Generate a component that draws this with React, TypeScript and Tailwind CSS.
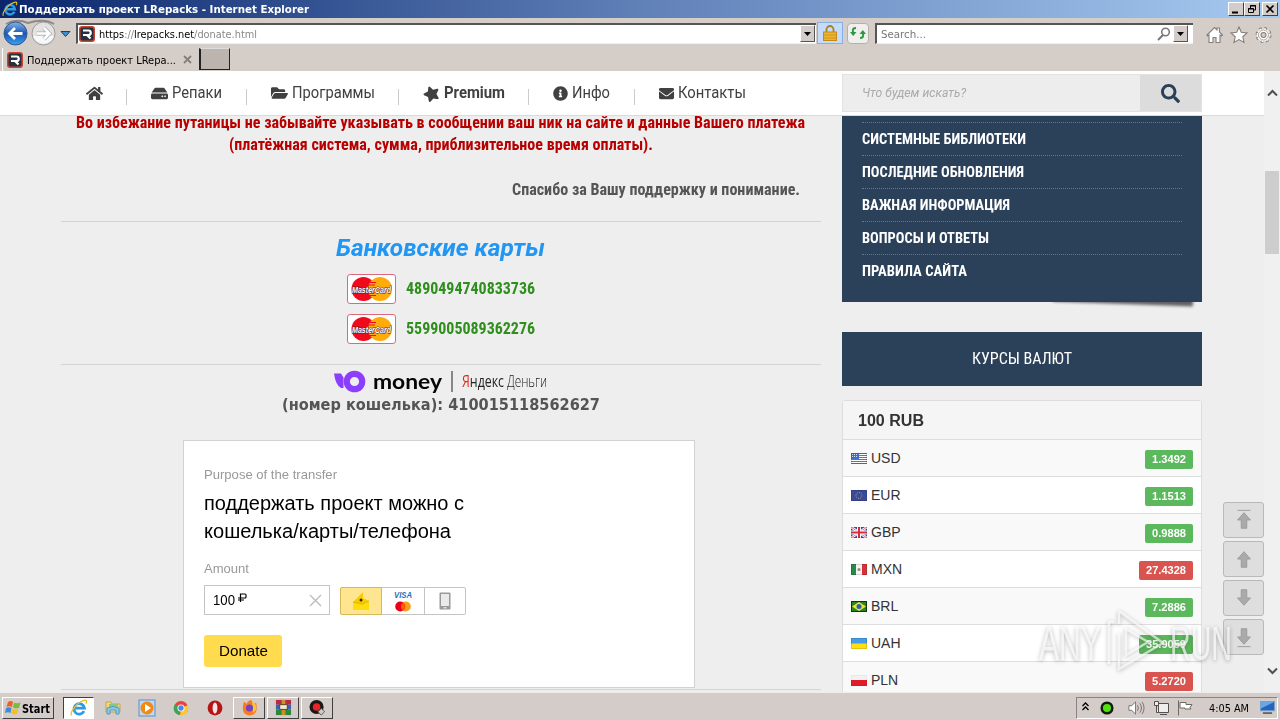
import React, { useLayoutEffect, useRef, useState } from 'react';
import { FaHome, FaHdd, FaFolderOpen, FaStar, FaInfoCircle, FaEnvelope, FaSearch } from 'react-icons/fa';

interface FitProps {
  w: number;
  className?: string;
  children: React.ReactNode;
}

// Text squeezed or stretched to a given width, stands in for condensed faces
const Fit: React.FC<FitProps> = ({ w, className = '', children }) => {
  const ref = useRef<HTMLSpanElement>(null);
  const [scale, setScale] = useState(1);

  useLayoutEffect(() => {
    if (ref.current && ref.current.offsetWidth) {
      setScale(w / ref.current.getBoundingClientRect().width);
    }
  }, [w]);

  return (
    <span className={`block shrink-0 whitespace-nowrap ${className}`} style={{ width: w }}>
      <span ref={ref} className="inline-block origin-left" style={{ transform: `scaleX(${scale})` }}>
        {children}
      </span>
    </span>
  );
};

const SiteIcon = () => (
  <svg viewBox="0 0 16 16" className="w-4 h-4 shrink-0">
    <rect width="16" height="16" rx="3" fill="#c8442f" />
    <rect x="1.5" y="1.5" width="13" height="13" rx="2" fill="#26303e" />
    <path d="M4 4.500h5.500a2 2 0 0 1 0 4.500H4M8 9l3.500 3.500" fill="none" stroke="#fff" strokeWidth="2.200" />
  </svg>
);

const IeIcon = ({ className = '' }) => (
  <svg viewBox="0 0 18 18" className={className}>
    <path d="M14 12.2a5.3 5.3 0 1 1 .5-3H5" fill="none" stroke="#2f9be0" strokeWidth="2.7" />
    <path d="M1.500 16.500C-.5 13 8 2.500 15 1.200c2.400-.3 1.600 2.400.8 3.400" fill="none" stroke="#e9bd2e" strokeWidth="1.300" />
  </svg>
);

const DropButton = () => (
  <span className="w-[15px] h-[17px] bg-[#d4ccc8] border border-t-white border-l-white border-r-[#555] border-b-[#555] flex items-center justify-center shrink-0">
    <svg viewBox="0 0 7 4" className="w-[7px] h-1"><path d="M0 0h7L3.500 4z" fill="#000" /></svg>
  </span>
);

const TitleBar = () => (
  <div className="h-[18px] shrink-0 bg-linear-to-r from-[#0c266c] via-[#6080b8] to-[#a6caf0] flex items-center pl-[2px] pr-[2px]">
    <IeIcon className="w-4 h-4 shrink-0" />
    <Fit w={290} className="ml-[1px] mt-[1px] text-[11px] leading-[17px] font-bold text-white">
      Поддержать проект LRepacks - Internet Explorer
    </Fit>
    <div className="ml-auto flex h-[14px]">
      {['min', 'restore', 'close'].map((kind) => (
        <span
          key={kind}
          className={`w-4 h-[14px] bg-[#d4ccc8] border border-t-white border-l-white border-r-[#404040] border-b-[#404040] flex items-center justify-center ${kind === 'close' ? 'ml-[2px]' : ''}`}
        >
          <svg viewBox="0 0 12 10" className="w-3 h-[10px]" fill="none" stroke="#000">
            {kind === 'min' && <path d="M2 8.500h6" strokeWidth="2" />}
            {kind === 'restore' && <path d="M4.500 4V1.500h5V6H8M4 2h6M2.500 4.500h5v4h-5zM2 5h6" />}
            {kind === 'close' && <path d="M2.500 1.500l7 7M9.500 1.500l-7 7" strokeWidth="1.700" />}
          </svg>
        </span>
      ))}
    </div>
  </div>
);

const AddressBar = () => (
  <div className="h-[30px] shrink-0 flex items-center pl-[2px]">
    <svg viewBox="0 0 70 28" className="w-[70px] h-7 shrink-0">
      <defs>
        <linearGradient id="back" x1="0" y1="0" x2="0" y2="1">
          <stop offset="0" stopColor="#86b4e6" />
          <stop offset=".5" stopColor="#1c56b4" />
          <stop offset="1" stopColor="#3ba4ee" />
        </linearGradient>
      </defs>
      <path d="M4 5Q14-1 26 4Q42-1 52 5" fill="none" stroke="#8e8a88" strokeWidth="2" />
      <circle cx="13.500" cy="14.500" r="11.500" fill="url(#back)" stroke="#31588f" />
      <path d="M20.500 14.500H8M13 9l-5.500 5.500L13 20" fill="none" stroke="#fff" strokeWidth="2.800" />
      <circle cx="41.500" cy="14.500" r="11.500" fill="#e4e3e4" stroke="#9a9a9c" />
      <path d="M31 17a11 11 0 0 0 21 0z" fill="#f8f8f8" />
      <path d="M34.500 14.500H47M42 9l5.500 5.500L42 20" fill="none" stroke="#aaa" strokeWidth="4" />
      <path d="M34.500 14.500H47M42 9l5.500 5.500L42 20" fill="none" stroke="#fff" strokeWidth="2.600" />
      <path d="M59 12.500h9l-4.500 5z" fill="#3f8fd0" stroke="#1d4265" />
    </svg>
    <div className="ml-[4px] w-[740px] h-[21px] bg-white border-t-2 border-l-2 border-[#555] border-b border-b-[#eee] flex items-center px-[1px]">
      <SiteIcon />
      <Fit w={158} className="ml-[4px] pt-[2px] text-[11px] leading-4 text-[#888]">
        <span className="text-black">https</span>://<span className="text-black">lrepacks.net</span>/donate.html
      </Fit>
      <span className="ml-auto flex"><DropButton /></span>
    </div>
    <div className="ml-[1px] w-[26px] h-[22px] bg-[#c4dcfa] border border-[#86b0e6] flex items-center justify-center">
      <svg viewBox="0 0 14 16" className="w-[14px] h-4">
        <path d="M3.500 8V4.500a3.500 3.500 0 0 1 7 0V8" fill="none" stroke="#a8811c" strokeWidth="1.800" />
        <rect x=".5" y="7" width="13" height="8.500" fill="#f0b42c" stroke="#c38a18" />
        <path d="M1 10h12M1 13h12" stroke="#c99620" />
      </svg>
    </div>
    <div className="ml-[4px] w-[22px] h-[21px] bg-[#f0efed] border border-[#b5b0ac] rounded-sm flex items-center justify-center">
      <svg viewBox="0 0 16 14" className="w-4 h-[14px]" fill="#2c9a3c">
        <path d="M6 1v2Q3 3 4 6h2.500L3.200 10 0 6h2Q1 1 6 1z" />
        <path d="M10 13v-2q3 0 2-3H9.500L12.800 4 16 8h-2q1 5-4 5z" />
      </svg>
    </div>
    <div className="ml-[6px] w-[318px] h-[21px] bg-white border-t-2 border-l-2 border-[#555] border-b border-b-[#eee] flex items-center pr-[5px]">
      <Fit w={45} className="ml-[4px] pt-[2px] text-[11px] leading-4 text-[#777]">Search...</Fit>
      <svg viewBox="0 0 14 14" className="w-[14px] h-[14px] ml-auto mr-[2px]" fill="none" stroke="#777">
        <circle cx="8.500" cy="5" r="3.800" strokeWidth="1.500" />
        <path d="M6 8l-5 5" strokeWidth="2" />
      </svg>
      <DropButton />
    </div>
    <svg viewBox="0 0 70 18" className="w-[70px] h-[18px] ml-[13px] mt-[4px] shrink-0" fill="#fff" stroke="#857e7a" strokeWidth="1.100">
      <path d="M1 9l7.500-7.500L11 4V2h2.500v4L16.500 9l-1 1L14 9v7.500h-4v-5H7v5H3V9l-1.500 1z" />
      <path d="M33 1l2.300 5.300 5.700.6-4.200 3.900 1.200 5.700-5-2.900-5 2.900 1.200-5.700L25 6.900l5.700-.6z" />
      <circle cx="57.500" cy="9" r="6.300" strokeWidth="3.400" strokeDasharray="2.400 2.550" />
      <circle cx="57.500" cy="9" r="6" stroke="#fff" strokeWidth="2" strokeDasharray="1.600 3.112" />
      <circle cx="57.500" cy="9" r="5" strokeWidth=".7" />
      <circle cx="57.500" cy="9" r="2.500" fill="#d5cdc8" />
    </svg>
  </div>
);

const TabRow = () => (
  <div className="h-[23px] shrink-0 flex items-start">
    <div className="ml-[2px] w-[196px] h-[23px] border-l border-white flex items-center pl-[4px]">
      <SiteIcon />
      <Fit w={149} className="ml-[4px] pt-[2px] text-[11px] leading-4 text-black">Поддержать проект LRepa...</Fit>
      <svg viewBox="0 0 9 9" className="w-[9px] h-[9px] ml-[7px]"><path d="M1 1l7 7M8 1L1 8" stroke="#85807d" strokeWidth="1.800" /></svg>
    </div>
    <div className="ml-[1px] w-[31px] h-[22px] bg-[#bcb4ae] border border-[#222] border-t-[#ddd] border-l-2" />
  </div>
);

const menu = [
  { label: '', w: 0, icon: <FaHome className="w-[17px] h-[17px]" />, box: 'w-[65px]' },
  { label: 'Репаки', w: 50, icon: <FaHdd className="w-[17px] h-[17px]" />, box: 'w-[120px]' },
  { label: 'Программы', w: 83, icon: <FaFolderOpen className="w-[17px] h-[16px]" />, box: 'w-[152px]' },
  { label: 'Premium', w: 61, icon: <FaStar className="w-[17px] h-[15px] -rotate-[20deg]" />, box: 'w-[130px]' },
  { label: 'Инфо', w: 38, icon: <FaInfoCircle className="w-[15px] h-[15px]" />, box: 'w-[106px]' },
  { label: 'Контакты', w: 68, icon: <FaEnvelope className="w-[15px] h-[15px]" />, box: 'w-[112px]' },
];

const SiteHeader = () => (
  <header className="h-[45px] shrink-0 bg-white border-b border-[#d8dadb] flex pl-[62px] font-[Roboto,sans-serif]">
    {menu.map((m, i) => (
      <div key={i} className={`flex items-center pl-6 h-[44px] text-[16px] text-[#404040] ${m.box}`}>
        {m.icon}
        {m.label && (
          <Fit w={m.w} className={m.label === 'Premium' ? 'ml-1 font-bold' : 'ml-1'}>{m.label}</Fit>
        )}
        {i < menu.length - 1 && <span className="ml-auto mt-2 w-px h-4 bg-[#ccc]" />}
      </div>
    ))}
    <div className="ml-[95px] mt-[3px] w-[360px] h-[38px] bg-[#ededed] border border-[#e2e2e2] flex">
      <Fit w={104} className="ml-[19px] text-[12px] leading-[36px] italic text-[#aaa]">Что будем искать?</Fit>
      <div className="ml-auto w-[61px] bg-[#dcdcdc] flex items-center justify-center">
        <FaSearch className="w-[19px] h-[19px] text-[#2b3f58]" />
      </div>
    </div>
  </header>
);

const MasterCard = () => (
  <svg viewBox="0 0 49 30" className="w-[49px] h-[30px]">
    <rect x=".5" y=".5" width="48" height="29" rx="2.500" fill="#fff" stroke="#e0687c" />
    <circle cx="16.500" cy="15" r="12" fill="#f00a1c" />
    <circle cx="33" cy="15" r="12" fill="#ffab0a" />
    <path d="M22 8.500h7M21 11h7M21 19h7M22 21.500h7" stroke="#f00a1c" />
    <text x="5" y="18.500" textLength="39" lengthAdjust="spacingAndGlyphs" fontFamily="Liberation Sans" fontWeight="bold" fontStyle="italic" fontSize="8.500" fill="#fff" stroke="#5a1a10" strokeWidth="1" paintOrder="stroke">MasterCard</text>
  </svg>
);

const WalletLogo = () => (
  <div className="h-6 flex items-center">
    <svg viewBox="0 0 32 24" className="w-8 h-6">
      <path d="M0 4.500h7l2.500 4v10.500H7Q1.500 16 0 4.500z" fill="#8b3ffd" />
      <circle cx="20.500" cy="12.500" r="7.700" fill="#eee" stroke="#8b3ffd" strokeWidth="6.200" />
    </svg>
    <Fit w={69} className="ml-[7px] text-[21px] leading-6 font-bold text-[#050505] font-[Lato,sans-serif]">money</Fit>
    <span className="ml-[9px] w-[2px] h-[21px] bg-[#888]" />
    <Fit w={42} className="ml-[9px] text-[16px] leading-6 font-normal text-[#222] font-['Open_Sans',sans-serif]">
      <span className="text-[#e0291c]">Я</span>ндекс
    </Fit>
    <Fit w={40} className="ml-[3px] text-[16px] leading-6 font-light text-[#222] font-['Open_Sans',sans-serif]">Деньги</Fit>
  </div>
);

const PaymentForm = () => (
  <div className="ml-[122px] mt-[24px] w-[512px] h-[248px] shrink-0 bg-white border border-[#d2d2d2] pl-5 pt-[24px] font-normal font-['Liberation_Sans',sans-serif]">
    <Fit w={133} className="text-[13px] leading-5 text-[#999]">Purpose of the transfer</Fit>
    <Fit w={260} className="mt-[4px] text-[20px] leading-7 text-black">поддержать проект можно с</Fit>
    <Fit w={247} className="text-[20px] leading-7 text-black">кошелька/карты/телефона</Fit>
    <Fit w={45} className="mt-[14px] text-[13px] leading-5 text-[#999]">Amount</Fit>
    <div className="mt-[6px] flex items-end">
      <div className="w-[126px] h-[30px] border border-[#c4c4c4] flex items-center pl-2 pr-[7px]">
        <Fit w={22} className="text-[14px] text-black">100</Fit>
        <svg viewBox="0 0 9 9" className="w-[9px] h-[9px] ml-[3px] mb-[5px]" fill="none" stroke="#000">
          <path d="M2.500 9V1h4.500q1 0 1 1.200v1.600q0 1.200-1 1.200H0M0 7h6" strokeWidth="1.200" />
        </svg>
        <svg viewBox="0 0 13 13" className="w-[13px] h-[13px] ml-auto"><path d="M1 1l11 11M12 1L1 12" stroke="#bbb" strokeWidth="1.300" /></svg>
      </div>
      <div className="ml-[10px] w-[126px] h-[28px] flex rounded-[2px] border border-[#c4c4c4]">
        <div className="w-[42px] h-[28px] -mt-px -ml-px bg-[#ffe58f] border border-[#d6b95a] rounded-l-[2px] flex items-center justify-center">
          <svg viewBox="0 0 18 20" className="w-[18px] h-5">
            <path d="M1 11L11 1v6l6 3v9H1z" fill="#f8cc00" />
            <path d="M1 11l9 2 7-3v9H1z" fill="#ffdc10" />
            <path d="M1 11l9 2 7-3" fill="none" stroke="#e0b400" />
            <circle cx="9" cy="9" r="1.500" fill="#3a2400" />
          </svg>
        </div>
        <div className="w-[43px] border-r border-[#c4c4c4] flex items-center justify-center">
          <svg viewBox="0 0 20 22" className="w-5 h-[22px]">
            <text x="1" y="8" textLength="18" lengthAdjust="spacingAndGlyphs" fontFamily="Liberation Sans" fontSize="8.500" fontWeight="bold" fontStyle="italic" fill="#2673b8">VISA</text>
            <circle cx="12.800" cy="16.500" r="5" fill="#f79f1a" />
            <circle cx="7.200" cy="16.500" r="5" fill="#ea001b" />
            <path d="M10 12.500a5 5 0 0 1 0 8a5 5 0 0 1 0-8z" fill="#ff5f01" />
          </svg>
        </div>
        <div className="flex-1 flex items-center justify-center">
          <svg viewBox="0 0 12 18" className="w-3 h-[18px]">
            <rect x=".5" y=".5" width="11" height="17" rx="1" fill="#999" />
            <rect x="2" y="2" width="8" height="12" fill="#eaeaea" />
            <rect x="4.500" y="15" width="3" height="1.500" fill="#ddd" />
          </svg>
        </div>
      </div>
    </div>
    <div className="mt-5 w-[78px] h-8 rounded-[3px] bg-[#ffdb4d] flex items-center justify-center">
      <Fit w={49} className="text-[15px] text-black">Donate</Fit>
    </div>
  </div>
);

const Article = () => (
  <main className="w-[760px] shrink-0 flex flex-col font-['Roboto_Condensed',Roboto,sans-serif] font-bold text-[16px] leading-[22px]">
    <Fit w={729} className="-mt-[4px] ml-[15px] text-[#b80000]">
      Во избежание путаницы не забывайте указывать в сообщении ваш ник на сайте и данные Вашего платежа
    </Fit>
    <Fit w={424} className="ml-[168px] text-[#b80000]">(платёжная система, сумма, приблизительное время оплаты).</Fit>
    <Fit w={288} className="mt-[23px] ml-[451px] text-[#555]">Спасибо за Вашу поддержку и понимание.</Fit>
    <div className="mt-[20px] h-px shrink-0 bg-[#d4d4d4]" />
    <Fit w={209} className="mt-[11px] mb-px ml-[275px] text-[24px] leading-[30px] italic text-[#2196f3] font-[Roboto,sans-serif]">Банковские карты</Fit>
    {['4890494740833736', '5599005089362276'].map((n) => (
      <div key={n} className="mt-[10px] ml-[286px] h-[30px] flex items-center">
        <MasterCard />
        <Fit w={129} className="ml-[10px] text-[#2f8f1c]">{n}</Fit>
      </div>
    ))}
    <div className="mt-[20px] h-px shrink-0 bg-[#d4d4d4]" />
    <div className="mt-[4px] ml-[273px]"><WalletLogo /></div>
    <Fit w={318} className="mt-[1px] ml-[221px] text-[16px] text-[#555] font-['DejaVu_Sans',sans-serif]">
      (номер кошелька): 410015118562627
    </Fit>
    <PaymentForm />
    <div className="mt-[1px] h-px shrink-0 bg-[#d4d4d4]" />
  </main>
);

const sections = [
  { label: 'Системные библиотеки', w: 164 },
  { label: 'Последние обновления', w: 162 },
  { label: 'Важная информация', w: 148 },
  { label: 'Вопросы и ответы', w: 127 },
  { label: 'Правила сайта', w: 105 },
];

const Flag = ({ code }: { code: string }) => (
  <svg viewBox="0 0 16 11" className="w-4 h-[11px]">
    {code === 'USD' && (
      <>
        <rect width="16" height="11" fill="#fff" />
        <path d="M0 .5h16M0 2.500h16M0 4.500h16M0 6.500h16M0 8.500h16M0 10.500h16" stroke="#e8404c" />
        <rect width="8" height="6" fill="#3a6ed0" />
        <path d="M1 1.500h6M1 3.500h6" stroke="#cfdcf6" strokeDasharray="1 1" />
      </>
    )}
    {code === 'EUR' && (
      <>
        <rect width="16" height="11" fill="#3c4a94" />
        <circle cx="8" cy="5.500" r="3" fill="none" stroke="#b5b390" strokeDasharray="1 1.300" />
      </>
    )}
    {code === 'GBP' && (
      <>
        <rect width="16" height="11" fill="#44529c" />
        <path d="M0 0l16 11M16 0L0 11" stroke="#fff" strokeWidth="2.500" />
        <path d="M0 0l16 11M16 0L0 11" stroke="#d8485c" strokeWidth=".8" />
        <path d="M8 0v11M0 5.500h16" stroke="#fff" strokeWidth="4" />
        <path d="M8 0v11M0 5.500h16" stroke="#d82c3c" strokeWidth="2" />
      </>
    )}
    {code === 'MXN' && (
      <>
        <rect width="16" height="11" fill="#f4f4f4" />
        <rect width="5" height="11" fill="#268a4a" />
        <rect x="11" width="5" height="11" fill="#d83038" />
        <circle cx="8" cy="5.500" r="1.600" fill="#a08c6c" />
      </>
    )}
    {code === 'BRL' && (
      <>
        <rect width="16" height="11" fill="#2c8420" />
        <path d="M8 1l7 4.500L8 10 1 5.500z" fill="#e8e43c" />
        <circle cx="8" cy="5.500" r="2.500" fill="#2c62a4" />
      </>
    )}
    {code === 'UAH' && (
      <>
        <rect width="16" height="11" fill="#ffdf10" />
        <rect width="16" height="5.500" fill="#459ce8" />
      </>
    )}
    {code === 'PLN' && (
      <>
        <rect width="16" height="11" fill="#f2f2f2" />
        <rect y="5" width="16" height="6" fill="#e01c28" />
      </>
    )}
    <rect x=".5" y=".5" width="15" height="10" fill="none" stroke="#000" strokeOpacity={code === 'BRL' ? 0.6 : code === 'PLN' ? 0.04 : 0.12} />
  </svg>
);

const rates = [
  { code: 'USD', value: '1.3492', up: true },
  { code: 'EUR', value: '1.1513', up: true },
  { code: 'GBP', value: '0.9888', up: true },
  { code: 'MXN', value: '27.4328', up: false },
  { code: 'BRL', value: '7.2886', up: true },
  { code: 'UAH', value: '35.9059', up: true },
  { code: 'PLN', value: '5.2720', up: false },
];

const Sidebar = () => (
  <aside className="ml-[21px] w-[360px] shrink-0 flex flex-col font-['Roboto_Condensed',Roboto,sans-serif]">
    <div className="relative h-[186px] shrink-0">
      <div className="absolute right-[9px] -bottom-[2px] w-[140px] h-[10px] rotate-[2deg] bg-black/60 blur-[1.5px]" />
      <div className="relative h-full bg-[#2b4059] px-5 pt-[6px]">
        {sections.map((s) => (
          <div key={s.label} className="h-[33px] border-t border-dotted border-[#58799a]">
            <Fit w={s.w} className="text-[14px] leading-[33px] font-bold uppercase text-white">{s.label}</Fit>
          </div>
        ))}
      </div>
    </div>
    <div className="mt-[30px] h-[54px] shrink-0 bg-[#2b4059] flex items-center justify-center">
      <Fit w={100} className="text-[16px] text-white">КУРСЫ ВАЛЮТ</Fit>
    </div>
    <div className="mt-[14px] shrink-0 border border-[#ddd] rounded-t-[3px] bg-white font-['Liberation_Sans',sans-serif]">
      <div className="h-[38px] bg-[#f5f5f5] flex items-center pl-[15px] pt-[2px]">
        <Fit w={66} className="text-[16px] font-bold text-[#333]">100 RUB</Fit>
      </div>
      {rates.map((r) => (
        <div key={r.code} className="h-[37px] border-t border-[#ddd] odd:bg-white even:bg-[#f9f9f9] flex items-center pl-[8px] pr-[8px]">
          <Flag code={r.code} />
          <span className="ml-1 text-[14px] text-[#333]">{r.code}</span>
          <span className={`ml-auto mt-[3px] h-[19px] px-[7px] rounded-[2px] flex items-center text-white ${r.up ? 'bg-[#5cb85c]' : 'bg-[#d9534f]'}`}>
            <Fit w={r.value.length === 7 ? 40 : 34} className="text-[11px] font-bold">{r.value}</Fit>
          </span>
        </div>
      ))}
    </div>
  </aside>
);

const scrollButtons = [
  { id: 'top', d: 'M4 1.500h14M11 4l7 8h-4v9H8v-9H4z', flip: false },
  { id: 'up', d: 'M11 4l7 8h-4v9H8v-9H4z', flip: false },
  { id: 'down', d: 'M11 4l7 8h-4v9H8v-9H4z', flip: true },
  { id: 'bottom', d: 'M4 1.500h14M11 4l7 8h-4v9H8v-9H4z', flip: true },
];

// Floating page controls, they sit over the content
const ScrollButtons = () => (
  <div className="absolute left-[1223px] top-[431px] flex flex-col gap-[3px]">
    {scrollButtons.map((b) => (
      <div key={b.id} className="w-[41px] h-[36px] rounded-[3px] bg-[#dedede] border border-[#b9b9b9] flex items-center justify-center">
        <svg viewBox="0 0 22 24" className={`w-[22px] h-[22px] ${b.flip ? 'rotate-180' : ''}`}>
          <path d={b.d} fill="#aaa" stroke="#999" />
        </svg>
      </div>
    ))}
  </div>
);

const Watermark = () => (
  <svg viewBox="0 0 200 68" className="absolute left-[1036px] top-[536px] w-[200px] h-[68px] drop-shadow-[0_1px_2px_rgba(0,0,0,0.4)]">
    <g fontFamily="Liberation Sans" fontSize="49" fill="#fff" fillOpacity=".7">
      <text x="3" y="53" textLength="62" lengthAdjust="spacingAndGlyphs">ANY</text>
      <text x="134" y="53" textLength="62" lengthAdjust="spacingAndGlyphs">RUN</text>
    </g>
    <g fill="none" stroke="#fff" strokeOpacity=".65" strokeWidth="2.500">
      <path d="M83 4v13M83 26v36l44-26L83 4" />
      <path d="M90 22v26l22-13z" />
      <path d="M78 15h-5v42" />
    </g>
  </svg>
);

const PageScrollbar = () => (
  <div className="w-4 shrink-0 bg-[#f0f0f0] flex flex-col items-center">
    <svg viewBox="0 0 11 8" className="w-[11px] h-2 mt-[18px]"><path d="M1 6.500l4.500-4.500L10 6.500" fill="none" stroke="#505050" strokeWidth="2" /></svg>
    <div className="mt-[74px] w-[14px] h-[83px] bg-[#cdcdcd]" />
    <svg viewBox="0 0 11 8" className="w-[11px] h-2 mt-auto mb-[17px]"><path d="M1 1.500l4.500 4.500L10 1.500" fill="none" stroke="#505050" strokeWidth="2" /></svg>
  </div>
);

const raised = 'bg-[#d4ccc8] border border-t-white border-l-white border-r-[#404040] border-b-[#404040]';

const Taskbar = () => (
  <div className="h-7 shrink-0 bg-[#d4ccc8] border-t border-[#f0ece9] flex items-center pl-[2px] pt-[2px]">
    <div className={`w-[52px] h-[22px] flex items-center pl-[2px] ${raised}`}>
      <svg viewBox="0 0 16 16" className="w-4 h-4">
        <path d="M3 2q3-2 5 0L7 7Q4 5.500 1.500 7z" fill="#e8622c" />
        <path d="M9 2.500q3 1.500 6.500 0L14 8q-3 1-6-.5z" fill="#7cbc3c" />
        <path d="M1 8q3-1.500 5.500 0L5.500 13Q3 11.500 0 13z" fill="#3c8cd8" />
        <path d="M7.500 8.500q3 1.500 6 .5L12 14q-3 1-6-.5z" fill="#f4c028" />
      </svg>
      <Fit w={28} className="ml-[1px] pt-[2px] text-[12px] leading-4 font-bold text-black">Start</Fit>
    </div>
    <div className="ml-[9px] w-[31px] h-[22px] bg-white border border-t-[#404040] border-l-[#404040] border-r-white border-b-white flex items-center justify-center">
      <IeIcon className="w-[18px] h-[18px]" />
    </div>
    <svg viewBox="0 0 18 18" className="w-[18px] h-[18px] ml-[10px]">
      <path d="M2 3h5l1 2h8v8H2z" fill="#f5d876" stroke="#c9a548" />
      <path d="M5 5h9v4H5z" fill="#8cc67e" />
      <path d="M3 15V9q6-3 12 0v6h-3v-4H6v4z" fill="#8cc8ee" stroke="#4a9ccc" />
    </svg>
    <svg viewBox="0 0 18 18" className="w-[18px] h-[18px] ml-4">
      <rect x="1" y="1" width="16" height="16" fill="#bcd8f2" stroke="#5a92cc" />
      <circle cx="9" cy="9" r="6.500" fill="#f08a14" />
      <path d="M7 5l6 4-6 4z" fill="#fff" />
    </svg>
    <svg viewBox="0 0 18 18" className="w-4 h-4 ml-[17px]">
      <circle cx="9" cy="9" r="8" fill="#e8453a" />
      <path d="M9 9L2 5a8 8 0 0 0 5 12z" fill="#3ca654" />
      <path d="M9 9l-1 8A8 8 0 0 0 16.500 6z" fill="#fcc934" />
      <circle cx="9" cy="9" r="4" fill="#fff" />
      <circle cx="9" cy="9" r="3" fill="#4688ec" />
    </svg>
    <svg viewBox="0 0 18 18" className="w-4 h-4 ml-[18px]">
      <circle cx="9" cy="9" r="8.300" fill="#b81418" />
      <ellipse cx="9" cy="9" rx="2.700" ry="6.200" fill="#f4e6e4" />
    </svg>
    <div className={`ml-[10px] w-[32px] h-[22px] flex items-center justify-center ${raised}`}>
      <svg viewBox="0 0 18 18" className="w-[17px] h-[17px]">
        <path d="M3 3l3 2q2-4 5-4 0 2 3 4l2-1q3 13-7 13.500Q-1 17 3 3z" fill="#f97b20" />
        <path d="M12 3q5 2 4 8l-3 4-1-6z" fill="#fcc430" />
        <circle cx="9" cy="9.500" r="3.800" fill="#7044c4" />
      </svg>
    </div>
    <div className={`ml-[2px] w-[32px] h-[22px] flex items-center justify-center ${raised}`}>
      <svg viewBox="0 0 18 18" className="w-[17px] h-[17px]">
        <rect x="1" y="1" width="16" height="5" fill="#b82840" />
        <rect x="1" y="6" width="16" height="5" fill="#3c60b0" />
        <rect x="1" y="11" width="16" height="6" fill="#2c8838" />
        <path d="M7 1h4v16H7z" fill="#c89030" />
        <rect x="5" y="6" width="8" height="5" fill="#f2e8d8" stroke="#5a3c20" />
      </svg>
    </div>
    <div className={`ml-[2px] w-[32px] h-[22px] flex items-center justify-center ${raised}`}>
      <svg viewBox="0 0 18 18" className="w-[17px] h-[17px]">
        <circle cx="8" cy="8.500" r="7.500" fill="#181818" />
        <circle cx="8" cy="8.500" r="4" fill="#e82424" />
        <path d="M13 10l3.500 3.500L13 17l-3.500-3.500z" fill="#ccc" stroke="#555" />
      </svg>
    </div>
    <div className="ml-auto mr-[2px] w-[202px] h-[22px] border border-t-[#8a8380] border-l-[#8a8380] border-r-white border-b-white flex items-center pl-[5px]">
      <svg viewBox="0 0 7 9" className="w-[7px] h-[9px] mb-[3px]"><path d="M.5 4l3-3 3 3M.5 8l3-3 3 3" fill="none" stroke="#000" strokeWidth="1.300" /></svg>
      <svg viewBox="0 0 14 14" className="w-[14px] h-[14px] ml-[11px]">
        <circle cx="7" cy="7" r="5.300" fill="#52e010" stroke="#121c0c" strokeWidth="2.500" />
      </svg>
      <svg viewBox="0 0 18 16" className="w-[17px] h-4 ml-[14px]" fill="#fff" stroke="#77716e">
        <path d="M1 5.500h3l4-4v13l-4-4H1z" />
        <path d="M10 5q2 3 0 6M12.500 3q3.500 5 0 10M15 1.500q4 6.500 0 13" fill="none" />
      </svg>
      <svg viewBox="0 0 16 16" className="w-4 h-4 ml-[8px]" fill="#eee" stroke="#55504e">
        <path d="M5.500 3.500h10v9h-10zM7 14.500h7M1.500 1.500h4v4h-4zM3.500 5.500v7h2" />
      </svg>
      <svg viewBox="0 0 16 16" className="w-4 h-4 ml-[8px]" fill="#fff" stroke="#6d6866">
        <path d="M1.500.5v15M3 2.500h6v2h6l-2 3 1 1.500H8V8H3z" />
      </svg>
      <Fit w={40} className="ml-[16px] pt-[2px] text-[11px] leading-4 text-black">4:05 AM</Fit>
      <svg viewBox="0 0 16 14" className="w-[15px] h-[13px] ml-[11px]">
        <rect x=".5" y=".5" width="15" height="10" fill="#2464bc" stroke="#7ba2d0" />
        <path d="M1 1h14L1 8z" fill="#68a6e4" />
        <path d="M3 13h10" stroke="#444" strokeWidth="1.500" />
      </svg>
    </div>
  </div>
);

export default function App() {
  return (
    <div className="w-[1280px] h-[720px] overflow-hidden flex flex-col bg-[#d5cdc8] font-['DejaVu_Sans_Condensed','DejaVu_Sans',sans-serif]">
      <TitleBar />
      <AddressBar />
      <TabRow />
      <div className="h-[621px] shrink-0 flex overflow-hidden">
        <div className="relative w-[1264px] shrink-0 flex flex-col bg-[#eee]">
          <SiteHeader />
          <div className="flex-1 min-h-0 overflow-hidden flex items-start pl-[61px]">
            <Article />
            <Sidebar />
          </div>
          <ScrollButtons />
          <Watermark />
        </div>
        <PageScrollbar />
      </div>
      <Taskbar />
    </div>
  );
}
